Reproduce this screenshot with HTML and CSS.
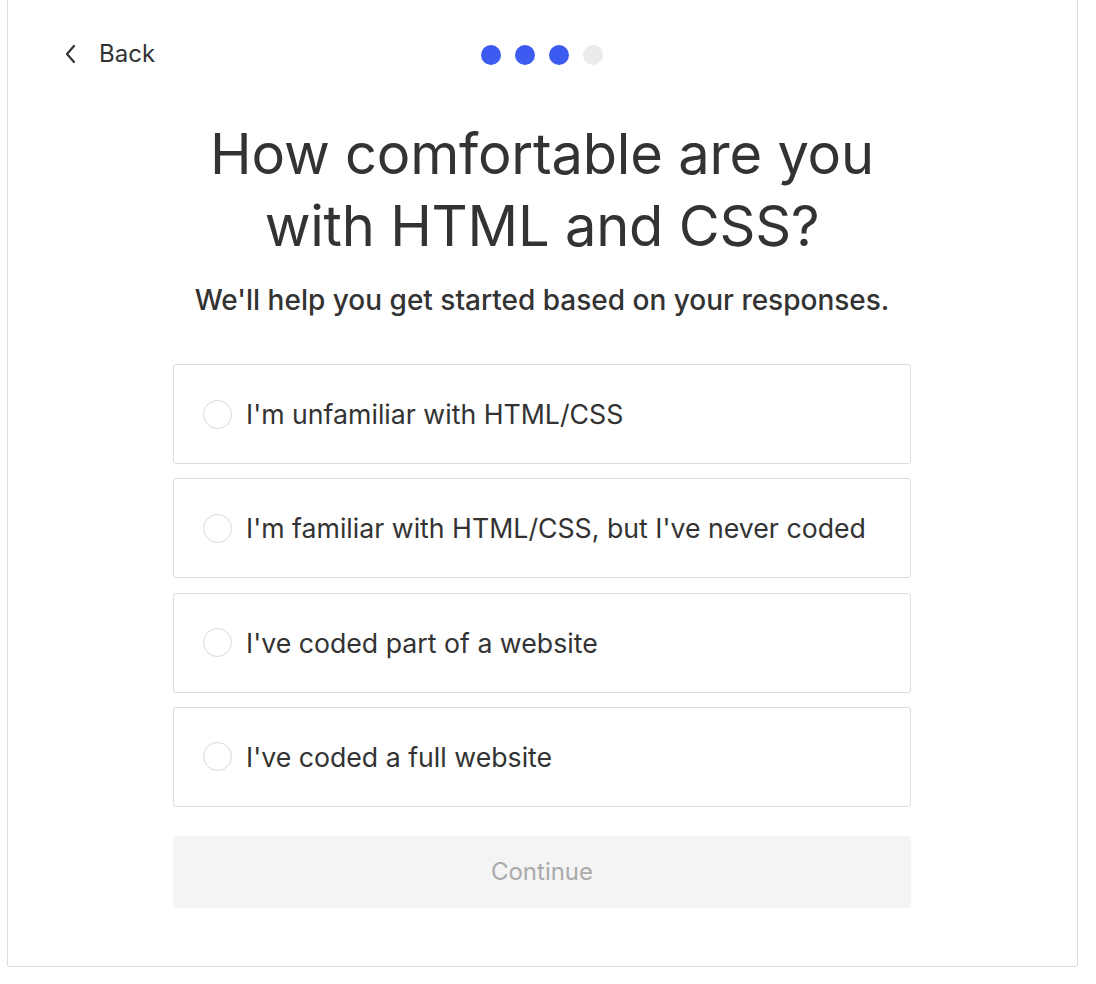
FILE: index.html
```html
<!DOCTYPE html>
<html lang="en">
<head>
<meta charset="utf-8">
<title>Onboarding</title>
<link rel="stylesheet" href="styles.css">
</head>
<body>
<div class="card">
  <div class="topbar">
    <a class="back" href="#">
      <svg class="chev" width="14" height="20" viewBox="0 0 14 20"><path d="M11 2 L4 10 L11 18" fill="none" stroke="#333" stroke-width="2.2" stroke-linecap="round" stroke-linejoin="round"/></svg>
      <span>Back</span>
    </a>
    <div class="dots">
      <span class="dot on"></span><span class="dot on"></span><span class="dot on"></span><span class="dot"></span>
    </div>
  </div>
  <h1 class="title">How comfortable are you<br>with HTML and CSS?</h1>
  <p class="subtitle">We'll help you get started based on your responses.</p>
  <div class="options">
    <label class="option"><span class="radio"></span><span class="opt-text">I'm unfamiliar with HTML/CSS</span></label>
    <label class="option"><span class="radio"></span><span class="opt-text">I'm familiar with HTML/CSS, but I've never coded</span></label>
    <label class="option"><span class="radio"></span><span class="opt-text">I've coded part of a website</span></label>
    <label class="option"><span class="radio"></span><span class="opt-text">I've coded a full website</span></label>
  </div>
  <button class="continue" disabled>Continue</button>
</div>
</body>
</html>
```
FILE: styles.css
```css
html, body {
  margin: 0;
  padding: 0;
  background: #fff;
}
body {
  font-family: Inter, "Noto Sans", sans-serif;
  color: #333;
  padding: 0 18px 0 7px;
}
.card {
  width: 1071px;
  height: 967px;
  box-sizing: border-box;
  border: 1px solid #dcdcdc;
  border-top: none;
  border-radius: 0 0 3px 3px;
  padding-right: 1px;
  display: flex;
  flex-direction: column;
  align-items: center;
}
.topbar {
  position: relative;
  width: 100%;
  height: 108px;
  display: flex;
  align-items: flex-start;
  justify-content: center;
}
.back {
  position: absolute;
  left: 55px;
  top: 38px;
  display: flex;
  align-items: center;
  gap: 22px;
  text-decoration: none;
  color: #333;
  font-size: 24px;
  line-height: 32px;
}
.chev { display: block; }
.dots {
  display: flex;
  gap: 14px;
  margin-top: 45px;
}
.dot {
  width: 20px;
  height: 20px;
  border-radius: 50%;
  background: #ebebeb;
}
.dot.on { background: #3d5af1; }
.title {
  margin: 10px 0 0;
  font-size: 56px;
  font-weight: 400;
  line-height: 72px;
  text-align: center;
  color: #333;
  letter-spacing: -0.2px;
}
.subtitle {
  margin: 22px 0 0;
  font-size: 28px;
  line-height: 32px;
  font-weight: 500;
  color: #333;
}
.options {
  margin-top: 48px;
  width: 738px;
  display: flex;
  flex-direction: column;
  gap: 14.3px;
}
.option {
  height: 100px;
  box-sizing: border-box;
  border: 1px solid #dcdcdc;
  border-radius: 3px;
  display: flex;
  align-items: center;
  padding-left: 29px;
  gap: 14px;
  font-size: 26.7px;
  color: #333;
}
.radio {
  width: 29px;
  height: 29px;
  box-sizing: border-box;
  border: 1px solid #d8d8d8;
  border-radius: 50%;
  flex: none;
}
.continue {
  margin-top: 29px;
  width: 738px;
  height: 72px;
  border: none;
  border-radius: 3px;
  background: #f4f4f4;
  color: #aaa;
  font-family: Inter, "Noto Sans", sans-serif;
  font-size: 24px;
}
```
